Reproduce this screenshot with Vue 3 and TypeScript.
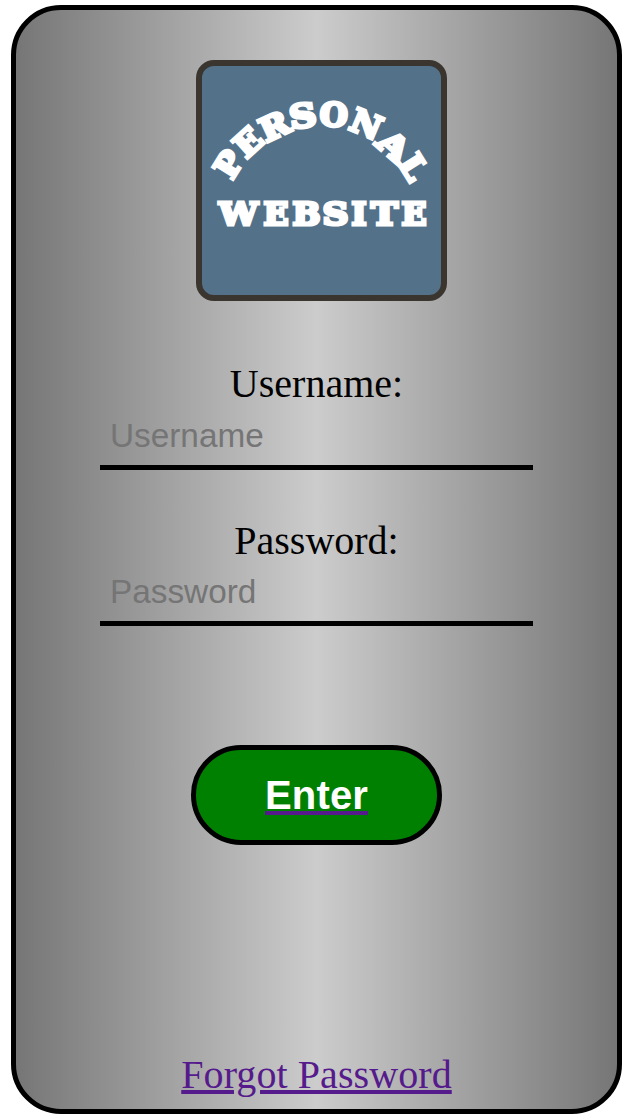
<script setup lang="ts">
import { ref } from 'vue'

interface Letter {
  char: string
  x: number
  y: number
  width: number
  angle: number
}

const username = ref('')
const password = ref('')

// Letter centres inside the 251 x 241 badge
const letters: Letter[] = [
  { char: 'P', x: 32.5, y: 104, width: 25, angle: -58 },
  { char: 'E', x: 52, y: 82, width: 26, angle: -42 },
  { char: 'R', x: 78.5, y: 66, width: 29, angle: -25 },
  { char: 'S', x: 106.7, y: 55.5, width: 27, angle: -8 },
  { char: 'O', x: 137.7, y: 54.5, width: 28, angle: 4 },
  { char: 'N', x: 170.5, y: 64, width: 31, angle: 23 },
  { char: 'A', x: 198, y: 86, width: 32, angle: 41 },
  { char: 'L', x: 218, y: 107, width: 24, angle: 58 },
  { char: 'W', x: 42.5, y: 153.5, width: 39, angle: 0 },
  { char: 'E', x: 80, y: 153.5, width: 25, angle: 0 },
  { char: 'B', x: 110.5, y: 153.5, width: 28, angle: 0 },
  { char: 'S', x: 139.5, y: 153.5, width: 26, angle: 0 },
  { char: 'I', x: 163, y: 153.5, width: 15, angle: 0 },
  { char: 'T', x: 188.5, y: 153.5, width: 27, angle: 0 },
  { char: 'E', x: 218, y: 153.5, width: 25, angle: 0 },
]
</script>

<template>
  <main class="card">
    <svg class="logo" viewBox="0 0 251 241" role="img" aria-label="Personal Website">
      <rect x="3" y="3" width="245" height="235" rx="15" class="plate" />
      <text
        v-for="(l, i) in letters"
        :key="i"
        class="letter"
        x="0"
        y="11.8"
        :textLength="l.width"
        lengthAdjust="spacingAndGlyphs"
        :transform="`translate(${l.x} ${l.y}) rotate(${l.angle})`"
      >{{ l.char }}</text>
    </svg>

    <form class="form" @submit.prevent>
      <label class="label" for="user">Username:</label>
      <input id="user" v-model="username" class="field" type="text" placeholder="Username" />
      <label class="label second" for="pass">Password:</label>
      <input id="pass" v-model="password" class="field" type="password" placeholder="Password" />
      <a class="enter-link" href="#"><button class="enter" type="button"><span>Enter</span></button></a>
    </form>

    <a class="forgot" href="#">Forgot Password</a>
  </main>
</template>

<style>
body {
  background: #fff;
}
</style>

<style scoped>
.card {
  box-sizing: border-box;
  width: 611px;
  height: 1109px;
  margin: 5px 0 0 11px;
  border: 5px solid #000;
  border-radius: 50px;
  background: linear-gradient(to right, #767676, #ccc, #767676);
  display: flex;
  flex-direction: column;
  align-items: center;
  font-family: "Liberation Serif", "Times New Roman", serif;
  font-size: 40px;
  line-height: 46px;
}
.logo {
  display: block;
  flex: none;
  width: 251px;
  height: 241px;
  margin: 50px 0 0 10px;
}
.plate {
  fill: #54718a;
  stroke: #3b352f;
  stroke-width: 6;
}
.letter {
  font-family: "DejaVu Serif", serif;
  font-size: 32.5px;
  font-weight: bold;
  text-anchor: middle;
  fill: #fff;
  stroke: #fff;
  stroke-width: 3.2;
}
.form {
  display: flex;
  flex-direction: column;
  align-items: center;
  width: 433px;
  margin-top: 60px;
}
.label {
  height: 46px;
  color: #000;
}
.second {
  height: 45px;
  margin-top: 48px;
}
.field {
  box-sizing: border-box;
  width: 433px;
  height: 63px;
  padding: 0 10px;
  border: 0;
  border-bottom: 5px solid #000;
  border-radius: 0;
  outline: 0;
  background: transparent;
  font: 33.333px "Liberation Sans", Arial, sans-serif;
  color: #000;
}
.field::placeholder {
  color: #757575;
  opacity: 1;
}
.enter-link {
  display: block;
  width: 251px;
  height: 100px;
  margin-top: 119px;
  color: #551a8b;
  text-decoration: none;
}
.enter {
  box-sizing: border-box;
  width: 251px;
  height: 100px;
  padding: 0;
  border: 5px solid #000;
  border-radius: 50px;
  background: #008000;
  color: #fff;
  font: bold 40px/46px "Liberation Sans", Arial, sans-serif;
  letter-spacing: 0.15px;
}
.enter span {
  text-decoration: underline #551a8b 4px;
  text-underline-offset: 2px;
}
.forgot {
  margin-top: 207px;
  color: #551a8b;
  letter-spacing: 0.08px;
  text-decoration: underline 4px;
  text-underline-offset: 2px;
}
</style>
